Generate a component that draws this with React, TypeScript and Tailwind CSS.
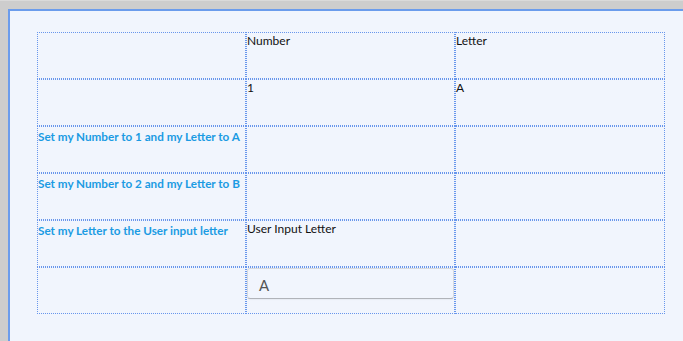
import React from 'react'

const cell = 'border border-dotted border-[#6896ec] h-[47px] pt-[1px]'
const label = 'text-[11.7px] font-bold text-[#1b9be3] leading-[14px] whitespace-nowrap pt-[1px]'
const plain = 'text-[12px] text-[#111] leading-[14px] whitespace-nowrap'

export default function App() {
  return (
    <div className="w-[683px] h-[341px] overflow-hidden bg-[#cdcdcd] border-t border-[#dadada] pt-2 pl-2" style={{ fontFamily: 'Lato, "Noto Sans", sans-serif' }}>
      <div className="w-[720px] h-[360px] border-l-2 border-t-2 border-[#6b9cec] bg-[#f1f5fd] pl-[27px] pt-[21px]">
        <div className="grid grid-cols-[209px_209px_210px] w-[628px]">
          <div className={cell} />
          <div className={cell}><div className={plain}>Number</div></div>
          <div className={cell}><div className={plain}>Letter</div></div>

          <div className={cell} />
          <div className={cell}><div className={plain}>1</div></div>
          <div className={cell}><div className={plain}>A</div></div>

          <div className={cell}><div className={label}>Set my Number to 1 and my Letter to A</div></div>
          <div className={cell} />
          <div className={cell} />

          <div className={cell}><div className={label}>Set my Number to 2 and my Letter to B</div></div>
          <div className={cell} />
          <div className={cell} />

          <div className={cell}><div className={label}>Set my Letter to the User input letter</div></div>
          <div className={cell}><div className={plain}>User Input Letter</div></div>
          <div className={cell} />

          <div className={cell} />
          <div className="border border-dotted border-[#6896ec] h-[47px]">
            <div className="h-[31px] rounded-[3px] border border-[#d6d9de] border-b-[#b0b3b9] shadow-[0_1px_1px_rgba(0,0,0,0.04)] flex items-center pl-[11px] pt-[3px] text-[15px] text-[#555]">
              A
            </div>
          </div>
          <div className={cell} />
        </div>
      </div>
    </div>
  )
}
